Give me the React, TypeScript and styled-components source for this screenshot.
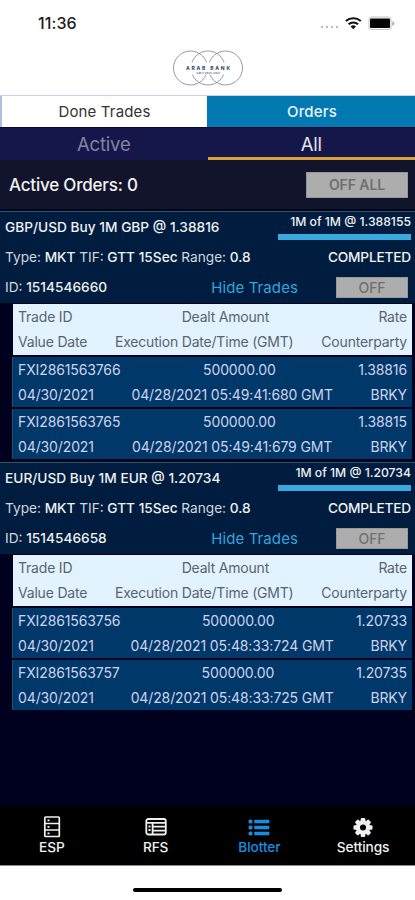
import React, { useState } from "react";
import styled, { createGlobalStyle } from "styled-components";

const GlobalStyle = createGlobalStyle`
  * {
    box-sizing: border-box;
  }

  body {
    margin: 0;
    background: #fff;
    font-family: Inter, "Liberation Sans", sans-serif;
  }

  button {
    font-family: inherit;
    padding: 0;
    border: 0;
    cursor: pointer;
  }
`;

const Screen = styled.main`
  display: flex;
  flex-direction: column;
  width: 415px;
  height: 900px;
  background: #fff;
  overflow: hidden;
  white-space: nowrap;
`;

const StatusBar = styled.div`
  display: flex;
  justify-content: space-between;
  align-items: center;
  height: 46px;
  padding: 0 20px 0 38px;
`;

const Clock = styled.span`
  font-size: 16px;
  font-weight: 500;
  letter-spacing: 0.1px;
  color: #1c1c1c;
`;

const StatusIcons = styled.div`
  display: flex;
  align-items: center;
`;

const LogoBar = styled.header`
  display: flex;
  justify-content: center;
  height: 49px;
  padding-top: 4px;
`;

const MainTabs = styled.div`
  display: flex;
  height: 32px;
  border-top: 1px solid #c3d6ee;
`;

const MainTab = styled.button<{ selected: boolean }>`
  flex: ${({ selected }) => (selected ? "0 0 208px" : "1")};
  height: 31px;
  font-size: 15px;
  font-weight: ${({ selected }) => (selected ? 500 : 400)};
  letter-spacing: 0.15px;
  color: ${({ selected }) => (selected ? "#e6f4fc" : "#333")};
  background: ${({ selected }) => (selected ? "#0379b1" : "#fff")};
  border-left: 2px solid ${({ selected }) => (selected ? "#0379b1" : "#a9c0e0")};
`;

const SubTabs = styled.div`
  display: flex;
  height: 33px;
  background: #15174a;
  border-top: 1px solid #080a26;
`;

const SubTab = styled.button<{ selected: boolean }>`
  flex: 1;
  height: 32px;
  padding-top: 2px;
  font-size: 18.5px;
  letter-spacing: -0.2px;
  color: ${({ selected }) => (selected ? "#e2e2e8" : "#83849f")};
  background: transparent;
  border-bottom: 3px solid ${({ selected }) => (selected ? "#d9a03c" : "transparent")};
`;

const Summary = styled.div`
  display: flex;
  justify-content: space-between;
  align-items: center;
  height: 49px;
  padding: 0 7px 0 9px;
  background: #12142c;
  color: #f2f2f4;
  font-size: 17px;
  font-weight: 500;
  letter-spacing: -0.2px;
`;

const OffButton = styled.button<{ large?: boolean }>`
  width: ${({ large }) => (large ? 102 : 72)}px;
  height: ${({ large }) => (large ? 26 : 21)}px;
  font-size: 14px;
  font-weight: ${({ large }) => (large ? 600 : 500)};
  letter-spacing: -0.1px;
  color: #707070;
  background: #adadad;
  border: 1px solid #989898;
`;

const Blotter = styled.section`
  flex: 1;
  background: #00001f;
`;

const OrderBlock = styled.article`
  height: 251px;
  border-top: 2px solid #05061a;
`;

const OrderHead = styled.div`
  height: 92px;
  padding: 0 4px 0 5px;
  color: #f0f0f0;
  font-size: 13.7px;
  font-weight: 500;
  background: #001d40;
  border-top: 1px solid #28566f;
`;

const OrderLine = styled.div`
  display: flex;
  justify-content: space-between;
  align-items: center;
  height: 30px;
`;

const OrderState = styled.span`
  letter-spacing: -0.2px;
`;

const Fill = styled.div`
  display: flex;
  flex-direction: column;
  align-items: flex-end;
  width: 133px;
  height: 28px;
  font-size: 12.2px;
  line-height: 18px;
`;

const FillTrack = styled.div`
  width: 100%;
  height: 6px;
  margin-top: 3px;
`;

const FillBar = styled.div`
  height: 100%;
  background: #3aa9df;
`;

const Label = styled.span`
  font-weight: 400;
  color: #d2d6dd;
`;

const TradesToggle = styled.button`
  margin-left: auto;
  margin-right: 38px;
  font-size: 15px;
  letter-spacing: 0.1px;
  color: #35a4dc;
  background: none;
`;

const OffSlot = styled.div`
  display: flex;
  padding-right: 3px;
`;

const TradeTable = styled.div`
  display: flex;
  flex-direction: column;
  gap: 2px;
  margin: 1px 3px 0 13px;
`;

const TradeEntry = styled.div<{ heading?: boolean }>`
  height: ${({ heading }) => (heading ? 51 : 50)}px;
  padding: 0 5px;
  font-size: 14px;
  letter-spacing: ${({ heading }) => (heading ? "-0.2px" : "-0.12px")};
  color: ${({ heading }) => (heading ? "#596370" : "#cfd2ec")};
  background: ${({ heading }) => (heading ? "#e2f3ff" : "#003869")};
  box-shadow: ${({ heading }) => (heading ? "none" : "-1px 0 #24506d")};
`;

const TradeLine = styled.div`
  display: flex;
  justify-content: space-between;
  align-items: center;
  height: 25px;
`;

const NavBar = styled.nav`
  display: flex;
  height: 60px;
  background: #000;
  border-bottom: 1px solid #8a8a8a;
`;

const NavItem = styled.button<{ active: boolean }>`
  display: flex;
  flex: 1;
  flex-direction: column;
  align-items: center;
  padding-top: 9px;
  font-size: 13.7px;
  font-weight: 500;
  letter-spacing: -0.1px;
  line-height: 16px;
  color: ${({ active }) => (active ? "#168fe2" : "#f0f0f0")};
  background: none;

  svg {
    display: block;
    width: 24px;
    height: 24px;
  }
`;

const HomeArea = styled.div`
  display: flex;
  justify-content: center;
  height: 34px;
  padding-top: 22px;
`;

const HomeIndicator = styled.div`
  width: 149px;
  height: 4px;
  border-radius: 2px;
  background: #000;
`;

type Trade = {
  id: string;
  amount: string;
  rate: string;
  valueDate: string;
  executed: string;
  counterparty: string;
};

type Order = {
  id: string;
  title: string;
  fill: string;
  filled: number;
  trades: Trade[];
};

const orders: Order[] = [
  {
    id: "1514546660",
    title: "GBP/USD Buy 1M GBP @ 1.38816",
    fill: "1M of 1M @ 1.388155",
    filled: 100,
    trades: [
      { id: "FXI2861563766", amount: "500000.00", rate: "1.38816", valueDate: "04/30/2021", executed: "04/28/2021 05:49:41:680 GMT", counterparty: "BRKY" },
      { id: "FXI2861563765", amount: "500000.00", rate: "1.38815", valueDate: "04/30/2021", executed: "04/28/2021 05:49:41:679 GMT", counterparty: "BRKY" },
    ],
  },
  {
    id: "1514546658",
    title: "EUR/USD Buy 1M EUR @ 1.20734",
    fill: "1M of 1M @ 1.20734",
    filled: 100,
    trades: [
      { id: "FXI2861563756", amount: "500000.00", rate: "1.20733", valueDate: "04/30/2021", executed: "04/28/2021 05:48:33:724 GMT", counterparty: "BRKY" },
      { id: "FXI2861563757", amount: "500000.00", rate: "1.20735", valueDate: "04/30/2021", executed: "04/28/2021 05:48:33:725 GMT", counterparty: "BRKY" },
    ],
  },
];

const SignalIcon = () => (
  <svg width="80" height="20" viewBox="0 0 80 20">
    {[7, 12, 17, 22].map((x) => (
      <circle key={x} cx={x} cy="14" r="1.2" fill="#bcbcbc" />
    ))}
    <g fill="none" stroke="#111" strokeWidth="2.2">
      <path d="M30.8 8a11.6 11.6 0 0 1 15 0" />
      <path d="M33.6 11.3a7 7 0 0 1 9.400 0" />
    </g>
    <path d="M35.600 13.400a4 4 0 0 1 5.400 0L38.300 16.200z" fill="#111" />
    <rect x="54" y="4" width="22" height="12.500" rx="2.500" fill="#fff" stroke="#c4c4c4" />
    <rect x="55" y="5.500" width="20" height="9.500" rx="1" fill="#050505" />
    <path d="M77.300 8v5q2-1 2-2.500t-2-2.500z" fill="#aaa" />
  </svg>
);

const Logo = () => (
  <svg width="76" height="38" viewBox="0 0 76 38">
    <g fill="none" stroke="#8b8f96" strokeWidth="0.9">
      <circle cx="20.500" cy="18" r="17" />
      <circle cx="38" cy="18" r="17" />
      <circle cx="55.500" cy="18" r="17" />
    </g>
    <path d="M14 12.500h47.500v12H14z" fill="#fff" />
    <text x="38" y="19.700" fontSize="5" fontWeight="700" textAnchor="middle" textLength="44" fill="#1c3a61">
      ARAB BANK
    </text>
    <text x="38" y="24" fontSize="2.600" fontWeight="600" textAnchor="middle" textLength="23" fill="#4b5d78">
      SWITZERLAND
    </text>
  </svg>
);

const EspIcon = () => (
  <svg viewBox="0 0 24 24" fill="none" stroke="currentColor" strokeWidth="1.700">
    <rect x="4.800" y="2" width="14.500" height="19.500" rx="0.800" />
    <path d="M4.800 8.500h14.500M4.800 15h14.500M7.500 5.300h2M7.500 11.800h2M7.500 18.300h2" />
  </svg>
);

const RfsIcon = () => (
  <svg viewBox="0 0 24 24" fill="none" stroke="currentColor" strokeWidth="1.800">
    <rect x="2.300" y="4" width="19.500" height="15.500" rx="2" />
    <path d="M2.300 7.800h19.500M8.600 7.800V19M8.600 11.700H22M8.600 15.600H22M4.500 11.500h2M4.500 15h2" />
  </svg>
);

const BlotterIcon = () => (
  <svg viewBox="0 0 24 24" fill="currentColor">
    {[4.500, 10.500, 16.500].map((y) => (
      <React.Fragment key={y}>
        <rect x="1.500" y={y} width="4" height="4" rx="1.600" />
        <rect x="7.300" y={y + 0.300} width="15" height="3.400" rx="0.500" />
      </React.Fragment>
    ))}
  </svg>
);

const SettingsIcon = () => (
  <svg viewBox="0 0 24 24">
    <g fill="currentColor">
      {[0, 45, 90, 135].map((angle) => (
        <rect key={angle} x="9.700" y="3" width="4.600" height="19" rx="1.200" transform={`rotate(${angle} 12 12.500)`} />
      ))}
      <circle cx="12" cy="12.500" r="7.200" />
    </g>
    <circle cx="12" cy="12.500" r="3" fill="#000" />
  </svg>
);

const navItems = [
  { name: "ESP", Icon: EspIcon },
  { name: "RFS", Icon: RfsIcon },
  { name: "Blotter", Icon: BlotterIcon },
  { name: "Settings", Icon: SettingsIcon },
];

const OrderCard: React.FC<{ order: Order }> = ({ order }) => {
  const [open, setOpen] = useState<boolean>(true);

  return (
    <OrderBlock>
      <OrderHead>
        <OrderLine>
          <span>{order.title}</span>
          <Fill>
            {order.fill}
            <FillTrack>
              <FillBar style={{ width: `${order.filled}%` }} />
            </FillTrack>
          </Fill>
        </OrderLine>
        <OrderLine>
          <span>
            <Label>Type:</Label> MKT <Label>TIF:</Label> GTT 15Sec <Label>Range:</Label> 0.8
          </span>
          <OrderState>COMPLETED</OrderState>
        </OrderLine>
        <OrderLine>
          <span>
            <Label>ID:</Label> {order.id}
          </span>
          <TradesToggle onClick={() => setOpen(!open)}>{open ? "Hide Trades" : "Show Trades"}</TradesToggle>
          <OffSlot>
            <OffButton>OFF</OffButton>
          </OffSlot>
        </OrderLine>
      </OrderHead>
      {open && (
        <TradeTable>
          <TradeEntry heading>
            <TradeLine>
              <span>Trade ID</span>
              <span>Dealt Amount</span>
              <span>Rate</span>
            </TradeLine>
            <TradeLine>
              <span>Value Date</span>
              <span>Execution Date/Time (GMT)</span>
              <span>Counterparty</span>
            </TradeLine>
          </TradeEntry>
          {order.trades.map((trade) => (
            <TradeEntry key={trade.id}>
              <TradeLine>
                <span>{trade.id}</span>
                <span>{trade.amount}</span>
                <span>{trade.rate}</span>
              </TradeLine>
              <TradeLine>
                <span>{trade.valueDate}</span>
                <span>{trade.executed}</span>
                <span>{trade.counterparty}</span>
              </TradeLine>
            </TradeEntry>
          ))}
        </TradeTable>
      )}
    </OrderBlock>
  );
};

export default function App() {
  const [mainTab, setMainTab] = useState<string>("Orders");
  const [subTab, setSubTab] = useState<string>("All");
  const [page, setPage] = useState<string>("Blotter");

  return (
    <>
      <GlobalStyle />
      <Screen>
        <StatusBar>
          <Clock>11:36</Clock>
          <StatusIcons>
            <SignalIcon />
          </StatusIcons>
        </StatusBar>
        <LogoBar>
          <Logo />
        </LogoBar>
        <MainTabs>
          {["Done Trades", "Orders"].map((name) => (
            <MainTab key={name} selected={mainTab === name} onClick={() => setMainTab(name)}>
              {name}
            </MainTab>
          ))}
        </MainTabs>
        <SubTabs>
          {["Active", "All"].map((name) => (
            <SubTab key={name} selected={subTab === name} onClick={() => setSubTab(name)}>
              {name}
            </SubTab>
          ))}
        </SubTabs>
        <Summary>
          <span>Active Orders: 0</span>
          <OffButton large>OFF ALL</OffButton>
        </Summary>
        <Blotter>
          {orders.map((order) => (
            <OrderCard key={order.id} order={order} />
          ))}
        </Blotter>
        <NavBar>
          {navItems.map(({ name, Icon }) => (
            <NavItem key={name} active={page === name} onClick={() => setPage(name)}>
              <Icon />
              {name}
            </NavItem>
          ))}
        </NavBar>
        <HomeArea>
          <HomeIndicator />
        </HomeArea>
      </Screen>
    </>
  );
}
